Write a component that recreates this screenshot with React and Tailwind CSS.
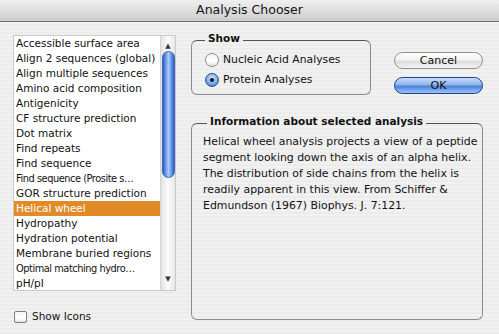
import React, { useState } from 'react';

const analyses = [
  { name: 'Accessible surface area' },
  { name: 'Align 2 sequences (global)' },
  { name: 'Align multiple sequences' },
  { name: 'Amino acid composition' },
  { name: 'Antigenicity' },
  { name: 'CF structure prediction' },
  { name: 'Dot matrix' },
  { name: 'Find repeats' },
  { name: 'Find sequence' },
  { name: 'Find sequence (Prosite s…', narrow: true },
  { name: 'GOR structure prediction' },
  { name: 'Helical wheel' },
  { name: 'Hydropathy' },
  { name: 'Hydration potential' },
  { name: 'Membrane buried regions' },
  { name: 'Optimal matching hydro…', narrow: true },
  { name: 'pH/pI' },
];

const infoLines = [
  'Helical wheel analysis projects a view of a peptide',
  'segment looking down the axis of an alpha helix.',
  'The distribution of side chains from the helix is',
  'readily apparent in this view. From Schiffer &',
  'Edmundson (1967) Biophys. J. 7:121.',
];

const Radio = ({ checked, label, onClick }) => (
  <button onClick={onClick} className="flex items-center gap-[4px] h-[20px] text-left">
    <span
      className={`w-[14px] h-[14px] rounded-full border flex items-center justify-center ${
        checked
          ? 'border-[#2a4f9c] bg-[radial-gradient(circle_at_50%_35%,#d6e8ff_0%,#7aa9ea_55%,#3767c6_100%)]'
          : 'border-[#8a8a8a] bg-[linear-gradient(180deg,#f4f4f4,#ffffff_60%,#e2e2e2)]'
      }`}
    >
      {checked && <span className="w-[4px] h-[4px] rounded-full bg-[#111]" />}
    </span>
    <span>{label}</span>
  </button>
);

const App = () => {
  const [selected, setSelected] = useState(11);
  const [kind, setKind] = useState('protein');
  const [showIcons, setShowIcons] = useState(false);

  return (
    <div
      className="w-[499px] h-[334px] flex flex-col overflow-hidden text-[#111] text-[10.5px] bg-[repeating-linear-gradient(180deg,#ececec_0px,#ececec_2px,#f1f1f1_2px,#f1f1f1_4px)]"
      style={{ fontFamily: '"DejaVu Sans", "Liberation Sans", sans-serif' }}
    >
      {/* title bar */}
      <div className="h-[22px] shrink-0 rounded-t-[5px] border-b border-[#6f6f6f] bg-[linear-gradient(180deg,#f0f0f0_0%,#dedede_50%,#cdcdcd_100%)] flex items-center justify-center text-[12.5px] text-[#151515]">
        Analysis Chooser
      </div>

      <div className="flex flex-1">
        {/* left column */}
        <div className="pl-[13px] pt-[13px] flex flex-col">
          <div className="flex w-[163px] h-[256px] border border-[#c9c9c9] bg-white">
            <div className="flex-1 flex flex-col overflow-hidden">
              {analyses.map((a, i) => (
                <div
                  key={a.name}
                  onClick={() => setSelected(i)}
                  className={`h-[15px] shrink-0 leading-[15px] pl-[2px] whitespace-nowrap cursor-default ${
                    a.narrow ? 'text-[9.8px] tracking-[-0.45px]' : ''
                  } ${i === selected ? 'bg-[#e08b27] text-white' : ''}`}
                >
                  {a.name}
                </div>
              ))}
            </div>
            {/* scrollbar */}
            <div className="w-[15px] flex flex-col items-center bg-[linear-gradient(90deg,#e4e4e4,#fafafa_50%,#e8e8e8)] border-l border-[#d4d4d4]">
              <span className="h-[14px] flex items-end text-[7px] leading-none text-[#333]">▲</span>
              <div className="mt-[1px] w-[13px] h-[127px] rounded-full border border-[#3b63b8] bg-[linear-gradient(90deg,#2f5cc4_0%,#74a4ec_30%,#a9cdf8_50%,#74a4ec_70%,#2f5cc4_100%)]" />
              <div className="flex-1" />
              <span className="h-[16px] flex items-start pt-[2px] text-[7px] leading-none text-[#333]">▼</span>
            </div>
          </div>

          <label className="mt-[18px] flex items-center gap-[5px] pl-[1px]">
            <button
              onClick={() => setShowIcons(!showIcons)}
              className="w-[13px] h-[12px] rounded-[2px] border border-[#7d7d7d] bg-[linear-gradient(180deg,#f5f5f5,#ffffff_60%,#e4e4e4)] flex items-center justify-center text-[9px] leading-none"
            >
              {showIcons ? '✓' : ''}
            </button>
            <span>Show Icons</span>
          </label>
        </div>

        {/* right column */}
        <div className="ml-[15px] w-[292px] pt-[9px] flex flex-col">
          <div className="flex items-start">
            <fieldset className="w-[180px] h-[64px] rounded-[6px] border border-[#8c8c8c] border-t-[#555] pl-[13px]">
              <legend className="px-[3px] pb-[4px] font-bold leading-[14px]">Show</legend>
              <div className="flex flex-col mt-[1px] text-[10.8px]">
                <Radio checked={kind === 'nucleic'} label="Nucleic Acid Analyses" onClick={() => setKind('nucleic')} />
                <Radio checked={kind === 'protein'} label="Protein Analyses" onClick={() => setKind('protein')} />
              </div>
            </fieldset>

            <div className="ml-[23px] mt-[21px] flex flex-col gap-[8px]">
              <button className="w-[89px] h-[17px] rounded-full border border-[#8e8e8e] bg-[linear-gradient(180deg,#ffffff_0%,#f2f2f2_45%,#dcdcdc_55%,#f4f4f4_100%)] text-[11px] leading-none">
                Cancel
              </button>
              <button className="w-[89px] h-[17px] rounded-full border border-[#203f8c] bg-[linear-gradient(180deg,#c9dcf8_0%,#8db4ee_45%,#4b82dc_55%,#9cc4f6_100%)] text-[11px] leading-none">
                OK
              </button>
            </div>
          </div>

          <fieldset className="mt-[19px] w-[292px] h-[206px] rounded-[6px] border border-[#8c8c8c] border-t-[#555] pl-[11px] pr-[4px]">
            <legend className="ml-[4px] px-[3px] pb-[4px] font-bold leading-[14px]">
              Information about selected analysis
            </legend>
            <p className="mt-[2px] leading-[16px] text-[10.9px] whitespace-nowrap">
              {infoLines.map((line, i) => (
                <span key={i} className="block">{line}</span>
              ))}
            </p>
          </fieldset>
        </div>
      </div>
    </div>
  );
};

export default App;
